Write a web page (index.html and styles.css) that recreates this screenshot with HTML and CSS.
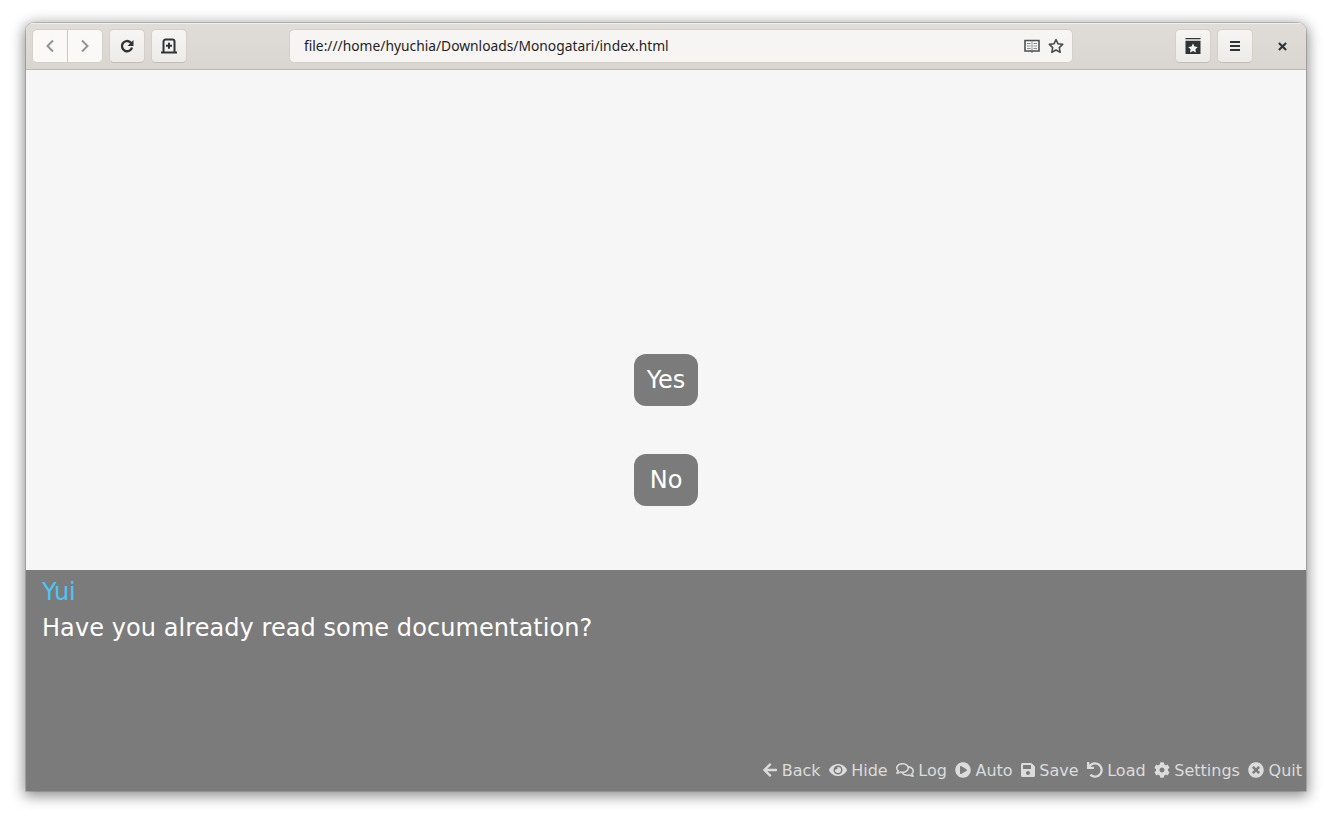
FILE: index.html
```html
<!DOCTYPE html>
<html lang="en">
<head>
  <meta charset="UTF-8" />
  <title>Monogatari</title>
  <link rel="stylesheet" href="styles.css">
</head>
<body>
  <div class="window">
    <header class="toolbar">
      <div class="btn-group">
        <div class="tool-btn nav-btn">
          <svg class="tool-icon" viewBox="0 0 16 16"><path class="line-dim" d="M11 2.500 5.500 8l5.500 5.500"/></svg>
        </div>
        <div class="tool-btn nav-btn">
          <svg class="tool-icon" viewBox="0 0 16 16"><path class="line-dim" d="M5 2.500 10.500 8 5 13.500"/></svg>
        </div>
      </div>
      <div class="tool-btn raised">
        <svg class="tool-icon" viewBox="0 0 16 16"><path class="line heavy" d="M13 9.500A5.100 5.100 0 1 1 11.400 4.300L13 6"/><path class="solid" d="M14.500 2v6H8.500z"/></svg>
      </div>
      <div class="tool-btn raised">
        <svg class="tool-icon" viewBox="0 0 16 16"><path class="line" d="M2.500 13.500V3.500a2 2 0 0 1 2-2h7a2 2 0 0 1 2 2v10M0 14.500h16"/><path class="line" d="M8 4.800v6M5 7.800h6"/></svg>
      </div>

      <div class="urlbar">
        <span class="url-text">file:///home/hyuchia/Downloads/Monogatari/index.html</span>
        <svg class="url-icon" viewBox="0 0 16 16"><path class="line-mid" d="M1 2.500h14v10.500H1z"/><path class="line-pale" d="M8 3v10M3 5.500h3.500M3 8h3.500M3 10.500h3.500M9.500 5.500H13M9.500 8H13M9.500 10.500H13"/><path class="line-mid" d="M8 13v1.500"/></svg>
        <svg class="url-icon" viewBox="0 0 16 16"><path class="line-mid wide" d="M8 1.500l2 4.300 4.700.6-3.400 3.200.9 4.700L8 12l-4.200 2.300.9-4.700L1.300 6.400 6 5.800z"/></svg>
      </div>

      <div class="tool-btn raised">
        <svg class="tool-icon" viewBox="0 0 16 16"><path class="solid" d="M.5 0h15v1.300H.5zM.5 2.700h15V16H.5z"/><path class="star" d="M8 5.500l1.500 3 3.300.4-2.400 2.300.6 3.300L8 13l-3 1.500.6-3.300-2.400-2.300 3.300-.4z"/></svg>
      </div>
      <div class="tool-btn raised">
        <svg class="tool-icon" viewBox="0 0 16 16"><path class="line" d="M3 4h10M3 8h10M3 12h10"/></svg>
      </div>
      <div class="close-btn">
        <svg class="close-icon" viewBox="0 0 10 10"><path class="line heavy" d="M1 1l8 8M9 1L1 9"/></svg>
      </div>
    </header>

    <main class="game">
      <section class="stage">
        <button class="choice">Yes</button>
        <button class="choice">No</button>
      </section>

      <section class="dialog">
        <div class="speaker">Yui</div>
        <p class="says">Have you already read some documentation?</p>
        <nav class="quick-menu">
          <span class="menu-item"><svg class="fa" viewBox="0 0 448 512"><path d="M257.5 445.1l-22.2 22.2c-9.4 9.4-24.6 9.4-33.9 0L7 273c-9.4-9.4-9.4-24.6 0-33.9L201.4 44.7c9.4-9.4 24.6-9.4 33.9 0l22.2 22.2c9.5 9.5 9.3 25-.4 34.3L136.6 216H424c13.3 0 24 10.7 24 24v32c0 13.3-10.7 24-24 24H136.6l120.5 114.8c9.8 9.3 10 24.8.4 34.3z"/></svg> Back</span>
          <span class="menu-item"><svg class="fa" viewBox="0 0 576 512"><path d="M572.52 241.4C518.29 135.59 410.93 64 288 64S57.68 135.64 3.48 241.41a32.35 32.35 0 0 0 0 29.19C57.71 376.41 165.07 448 288 448s230.32-71.64 284.52-177.41a32.35 32.35 0 0 0 0-29.19zM288 400a144 144 0 1 1 144-144 143.93 143.93 0 0 1-144 144zm0-240a95.31 95.31 0 0 0-25.31 3.79 47.85 47.85 0 0 1-66.9 66.9A95.78 95.78 0 1 0 288 160z"/></svg> Hide</span>
          <span class="menu-item"><svg class="fa" viewBox="0 0 576 512"><path d="M532 386.2c27.5-27.1 44-61.1 44-98.2 0-80-76.5-146.1-176.2-157.9C368.3 72.5 294.3 32 208 32 93.1 32 0 103.6 0 192c0 37 16.5 71 44 98.2-15.3 30.7-37.3 54.5-37.7 54.9-6.3 6.7-8.1 16.5-4.4 25 3.6 8.5 12 14 21.2 14 53.5 0 96.7-20.2 125.2-38.8 9.2 2.1 18.7 3.7 28.4 4.9C208.1 407.6 281.8 448 368 448c20.8 0 40.8-2.4 59.8-6.8C456.3 459.7 499.4 480 553 480c9.2 0 17.5-5.5 21.2-14 3.6-8.5 1.9-18.3-4.4-25-.4-.3-22.5-24.1-37.8-54.8zm-392.8-92.3L122.1 305c-14.1 9.1-28.5 16.3-43.1 21.4 2.7-4.7 5.4-9.7 8-14.8l15.5-31.1L77.7 256C64.2 242.6 48 220.7 48 192c0-60.7 73.3-112 160-112s160 51.3 160 112-73.3 112-160 112c-16.5 0-33-1.9-49-5.6l-19.8-4.5zM498.3 352l-24.7 24.4 15.5 31.1c2.6 5.1 5.3 10.1 8 14.8-14.6-5.1-29-12.3-43.1-21.4l-17.1-11.1-19.9 4.6c-16 3.7-32.5 5.6-49 5.6-54 0-102.2-20.1-131.3-49.7C338 339.5 416 272.9 416 192c0-3.4-.3-6.7-.7-10C479.7 196.5 528 238.8 528 288c0 28.7-16.2 50.6-29.7 64z"/></svg> Log</span>
          <span class="menu-item"><svg class="fa" viewBox="0 0 512 512"><path d="M256 8C119 8 8 119 8 256s111 248 248 248 248-111 248-248S393 8 256 8zm115.7 272l-176 101c-15.8 8.8-35.7-2.5-35.7-21V152c0-18.4 19.8-29.8 35.7-21l176 107c16.4 9.2 16.4 32.9 0 42z"/></svg> Auto</span>
          <span class="menu-item"><svg class="fa" viewBox="0 0 448 512"><path d="M433.941 129.941l-83.882-83.882A48 48 0 0 0 316.118 32H48C21.49 32 0 53.49 0 80v352c0 26.51 21.49 48 48 48h352c26.51 0 48-21.49 48-48V163.882a48 48 0 0 0-14.059-33.941zM224 416c-35.346 0-64-28.654-64-64 0-35.346 28.654-64 64-64s64 28.654 64 64c0 35.346-28.654 64-64 64zm96-304.52V212c0 6.627-5.373 12-12 12H76c-6.627 0-12-5.373-12-12V108c0-6.627 5.373-12 12-12h228.52c3.183 0 6.235 1.264 8.485 3.515l3.48 3.48A11.996 11.996 0 0 1 320 111.48z"/></svg> Save</span>
          <span class="menu-item"><svg class="fa" viewBox="0 0 512 512"><path d="M212.333 224.333H12c-6.627 0-12-5.373-12-12V12C0 5.373 5.373 0 12 0h48c6.627 0 12 5.373 12 12v78.112C117.773 39.279 184.26 7.47 258.175 8.007c136.906.994 246.448 111.623 246.157 248.532C504.041 393.258 393.12 504 256.333 504c-64.089 0-122.496-24.313-166.51-64.215-5.099-4.622-5.334-12.554-.467-17.42l33.967-33.967c4.474-4.474 11.662-4.717 16.401-.525C170.76 415.336 211.58 432 256.333 432c97.268 0 176-78.716 176-176 0-97.267-78.716-176-176-176-58.496 0-110.28 28.476-142.274 72.333h98.274c6.627 0 12 5.373 12 12v48c0 6.627-5.373 12-12 12z"/></svg> Load</span>
          <span class="menu-item"><svg class="fa" viewBox="0 0 512 512"><path d="M487.4 315.7l-42.6-24.6c4.3-23.2 4.3-47 0-70.2l42.6-24.6c4.9-2.8 7.1-8.6 5.5-14-11.1-35.6-30-67.8-54.7-94.6-3.8-4.1-10-5.1-14.8-2.3L380.8 110c-17.9-15.4-38.5-27.3-60.8-35.1V25.8c0-5.6-3.9-10.5-9.4-11.7-36.7-8.2-74.3-7.8-109.2 0-5.5 1.2-9.4 6.1-9.4 11.7V75c-22.2 7.9-42.8 19.8-60.8 35.1L88.7 85.5c-4.9-2.8-11-1.9-14.8 2.3-24.7 26.7-43.6 58.9-54.7 94.6-1.7 5.4.6 11.2 5.5 14L67.3 221c-4.3 23.2-4.3 47 0 70.2l-42.6 24.6c-4.9 2.8-7.1 8.6-5.5 14 11.1 35.6 30 67.8 54.7 94.6 3.8 4.1 10 5.1 14.8 2.3l42.6-24.6c17.9 15.4 38.5 27.3 60.8 35.1v49.2c0 5.6 3.9 10.5 9.4 11.7 36.7 8.2 74.3 7.8 109.2 0 5.5-1.2 9.4-6.1 9.4-11.7v-49.2c22.2-7.9 42.8-19.8 60.8-35.1l42.6 24.6c4.9 2.8 11 1.9 14.8-2.3 24.7-26.7 43.6-58.9 54.7-94.6 1.5-5.5-.7-11.3-5.6-14.1zM256 336c-44.1 0-80-35.9-80-80s35.9-80 80-80 80 35.9 80 80-35.9 80-80 80z"/></svg> Settings</span>
          <span class="menu-item"><svg class="fa" viewBox="0 0 512 512"><path d="M256 8C119 8 8 119 8 256s111 248 248 248 248-111 248-248S393 8 256 8zm121.6 313.1c4.7 4.7 4.7 12.3 0 17L338 377.6c-4.7 4.7-12.3 4.7-17 0L256 312l-65.1 65.6c-4.7 4.7-12.3 4.7-17 0L134.4 338c-4.7-4.7-4.7-12.3 0-17l65.6-65-65.6-65.1c-4.7-4.7-4.7-12.3 0-17l39.6-39.6c4.7-4.7 12.3-4.7 17 0l65 65.7 65.1-65.6c4.7-4.7 12.3-4.7 17 0l39.6 39.6c4.7 4.7 4.7 12.3 0 17L312 256l65.6 65.1z"/></svg> Quit</span>
        </nav>
      </section>
    </main>
  </div>
</body>
</html>
```

FILE: styles.css
```css
html, body {
  height: 100%;
}
body {
  margin: 0;
  background: #fff;
  overflow: hidden;
  font-family: "DejaVu Sans", sans-serif;
}
.window {
  margin: 23px 26px 0;
  height: 768px;
  display: flex;
  flex-direction: column;
  border-radius: 8px 8px 0 0;
  overflow: hidden;
  box-shadow: 0 0 0 1px rgba(0, 0, 0, 0.15), 0 3px 14px 2px rgba(0, 0, 0, 0.45);
}
.toolbar {
  height: 47px;
  flex-shrink: 0;
  box-sizing: border-box;
  display: flex;
  align-items: center;
  gap: 6px;
  padding: 0 0 1px 6px;
  background: linear-gradient(#e0ddd9, #d9d6d1);
  border-top: 1px solid #efedea;
  border-bottom: 1px solid #bfb8b1;
}
.btn-group {
  display: flex;
  width: 71px;
  height: 34px;
  flex-shrink: 0;
  box-sizing: border-box;
  border: 1px solid #d3cfc9;
  border-radius: 5px;
  background: #faf9f8;
}
.nav-btn {
  flex: 1;
  display: flex;
  align-items: center;
  justify-content: center;
}
.nav-btn + .nav-btn {
  border-left: 1px solid #cdc7c2;
}
.tool-btn.raised {
  width: 36px;
  height: 34px;
  flex-shrink: 0;
  box-sizing: border-box;
  display: flex;
  align-items: center;
  justify-content: center;
  border: 1px solid #d3cfc9;
  border-bottom-color: #c2bdb7;
  border-radius: 5px;
  background: linear-gradient(#f6f5f4, #edebe9);
}
.tool-icon {
  width: 16px;
  height: 16px;
}
.line, .line-dim, .line-mid, .line-pale {
  fill: none;
  stroke: #2e3436;
  stroke-width: 2;
}
.line.heavy {
  stroke-width: 2.4;
}
.line-dim {
  stroke: #8f9494;
}
.line-mid {
  stroke: #4a4f50;
  stroke-width: 1.6;
}
.line-pale {
  stroke: #8c9090;
  stroke-width: 1;
}
.line-mid.wide {
  stroke-linejoin: round;
}
.solid {
  fill: #2e3436;
}
.star {
  fill: #f4f3f1;
}
.urlbar {
  width: 784px;
  height: 34px;
  flex-shrink: 0;
  box-sizing: border-box;
  margin: 0 96px;
  padding: 0 8px 0 14px;
  display: flex;
  align-items: center;
  gap: 8px;
  border: 1px solid #d3cfc9;
  border-radius: 5px;
  background: #f6f5f3;
  font-family: "Noto Sans", sans-serif;
  font-size: 13.8px;
  color: #1f2324;
}
.url-text {
  flex: 1;
  margin-bottom: 2px;
}
.url-icon {
  width: 16px;
  height: 16px;
}
.close-btn {
  width: 47px;
  flex-shrink: 0;
  display: flex;
  justify-content: center;
}
.close-icon {
  width: 9px;
  height: 9px;
}
.game {
  flex: 1;
  display: flex;
  flex-direction: column;
}
.stage {
  flex: 1;
  background: #f6f6f6;
  display: flex;
  flex-direction: column;
  align-items: center;
  justify-content: flex-end;
  gap: 48px;
  padding-bottom: 64px;
}
.choice {
  width: 64px;
  height: 52px;
  padding: 0;
  border: none;
  border-radius: 12px;
  background: #7b7b7b;
  color: #fff;
  font-family: inherit;
  font-size: 24px;
}
.dialog {
  height: 221px;
  box-sizing: border-box;
  background: #7b7b7b;
  padding: 5px 4px 8px 16px;
  display: flex;
  flex-direction: column;
}
.speaker {
  color: #4fc3f7;
  font-size: 24px;
  line-height: 34px;
}
.says {
  margin: 4px 0 0;
  color: #fff;
  font-size: 24px;
  line-height: 30px;
  letter-spacing: 0.07px;
}
.quick-menu {
  margin-top: auto;
  display: flex;
  justify-content: flex-end;
  gap: 8px;
  color: #dcdcdc;
  font-size: 16px;
  line-height: 24px;
}
.fa {
  height: 16px;
  fill: currentColor;
  vertical-align: -2px;
  margin-right: -0.45px;
}
```
